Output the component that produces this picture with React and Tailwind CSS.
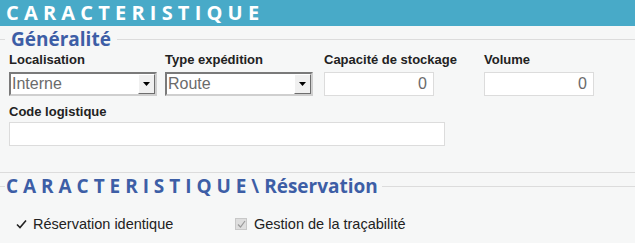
import React from "react";

function Legend({ children, pad }) {
  return (
    <div className="flex items-center h-[26px]">
      <div className="w-[5px] h-px bg-[#dcdcdc]" />
      <div className={`${pad} text-[#3d5ea6] font-bold text-[19px] leading-[26px] whitespace-nowrap`} style={{ fontFamily: '"Open Sans", sans-serif' }}>
        {children}
      </div>
      <div className="flex-1 h-px bg-[#dcdcdc]" />
    </div>
  );
}

function Select({ value }) {
  return (
    <div className="w-[148px] h-[24px] bg-white border-2 border-t-[#7a7a7a] border-l-[#7a7a7a] border-b-[#cfcfcf] border-r-[#cfcfcf] flex items-center justify-between">
      <span className="pl-px text-[16px] leading-[20px] text-[#6b6b6b]">{value}</span>
      <div className="w-[17px] h-[20px] bg-[#f0f0f0] border border-t-white border-l-white border-b-[#6e6e6e] border-r-[#6e6e6e] flex items-center justify-center">
        <svg width="7" height="4" viewBox="0 0 7 4">
          <path d="M0 0 H7 L3.5 4 Z" fill="#000" />
        </svg>
      </div>
    </div>
  );
}

function NumInput({ value, w }) {
  return (
    <div className={`${w} h-[24px] bg-white border border-[#dcdcdc] flex items-center justify-end pr-[6px] text-[16px] text-[#6b6b6b]`}>
      {value}
    </div>
  );
}

export default function App() {
  return (
    <div className="w-[635px] h-[243px] bg-[#f6f7f7] overflow-hidden text-[#222]" style={{ fontFamily: '"Liberation Sans", Arial, sans-serif' }}>
      <div className="h-[26px] bg-[#48aac8] px-[6px] text-white font-bold text-[20px] leading-[26px] whitespace-nowrap" style={{ fontFamily: '"Open Sans", sans-serif' }}>
        C A R A C T E R I S T I Q U E
      </div>
      <Legend pad="pl-[6px] pr-[6px]">Généralité</Legend>
      <div className="flex pl-[9px]">
        <div className="w-[156px] flex flex-col">
          <div className="font-bold text-[13px] leading-[16px]">Localisation</div>
          <div className="mt-[4px]"><Select value="Interne" /></div>
        </div>
        <div className="w-[159px] flex flex-col">
          <div className="font-bold text-[13px] leading-[16px]">Type expédition</div>
          <div className="mt-[4px]"><Select value="Route" /></div>
        </div>
        <div className="w-[160px] flex flex-col">
          <div className="font-bold text-[13px] leading-[16px]">Capacité de stockage</div>
          <div className="mt-[4px]"><NumInput value="0" w="w-[110px]" /></div>
        </div>
        <div className="flex flex-col">
          <div className="font-bold text-[13px] leading-[16px]">Volume</div>
          <div className="mt-[4px]"><NumInput value="0" w="w-[110px]" /></div>
        </div>
      </div>
      <div className="pl-[9px] mt-[8px]">
        <div className="font-bold text-[13px] leading-[16px]">Code logistique</div>
        <div className="mt-[2px] w-[436px] h-[24px] bg-white border border-[#dcdcdc]" />
      </div>
      <div className="mt-[26px] h-px bg-[#dcdcdc]" />
      <Legend pad="pl-[1px] pr-[4px]">C A R A C T E R I S T I Q U E \ Réservation</Legend>
      <div className="flex items-center mt-[16px] text-[14.5px] leading-[18px]">
        <div className="w-[219px] flex items-center pl-[16px]">
          <svg width="11" height="10" viewBox="0 0 11 10" className="mr-[6px]">
            <path d="M1 5.5 L4 8.5 L10 1.5" fill="none" stroke="#222" strokeWidth="1.6" />
          </svg>
          <span>Réservation identique</span>
        </div>
        <div className="flex items-center pl-[16px]">
          <div className="w-[12px] h-[12px] bg-[#dedede] border border-[#c8c8c8] flex items-center justify-center mr-[7px]">
            <svg width="9" height="8" viewBox="0 0 9 8">
              <path d="M1 4.5 L3.5 7 L8 1" fill="none" stroke="#9a9a9a" strokeWidth="1.2" />
            </svg>
          </div>
          <span>Gestion de la traçabilité</span>
        </div>
      </div>
    </div>
  );
}
